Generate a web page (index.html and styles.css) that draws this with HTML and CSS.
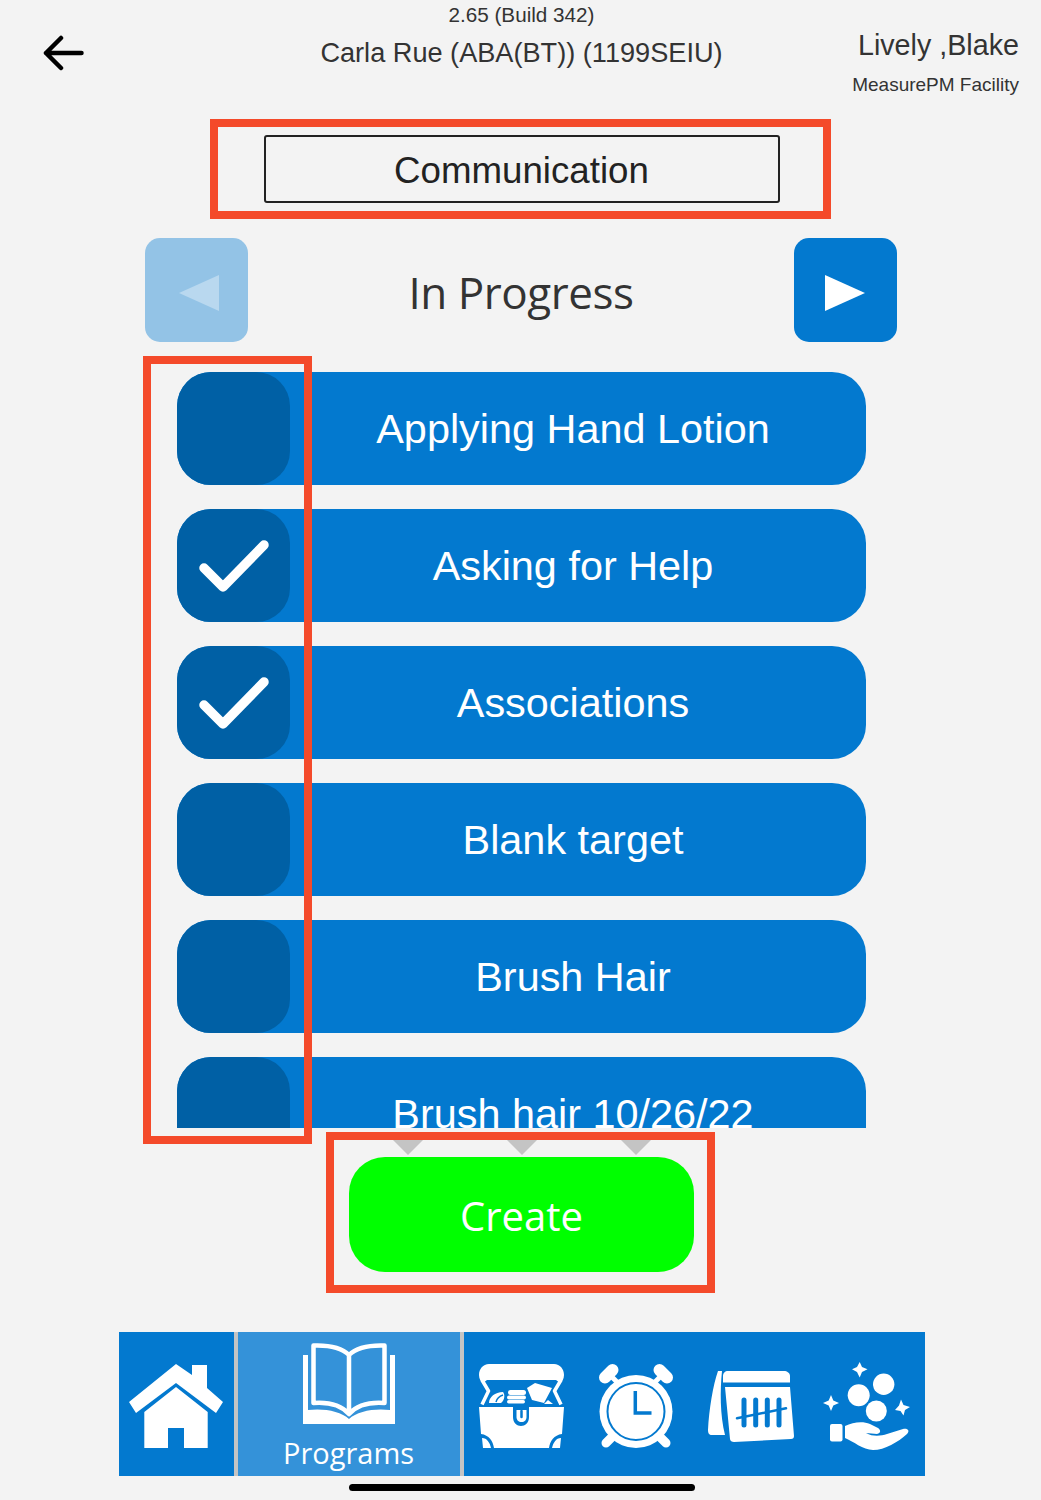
FILE: index.html
```html
<!DOCTYPE html>
<html lang="en">
<head>
<meta charset="utf-8">
<title>In Progress</title>
<link rel="stylesheet" href="styles.css">
</head>
<body>
<div class="page">
  <header class="header">
    <div class="header-left">
      <svg class="back" viewBox="0 0 42 36" width="42" height="36"><path d="M38.500 18H3M18 3 3 18l15 15" fill="none" stroke="#000" stroke-width="4.500" stroke-linecap="round" stroke-linejoin="round"/></svg>
    </div>
    <div class="header-center">
      <div class="version">2.65 (Build 342)</div>
      <div class="client">Carla Rue (ABA(BT)) (1199SEIU)</div>
    </div>
    <div class="header-right">
      <div class="user">Lively ,Blake</div>
      <div class="facility">MeasurePM Facility</div>
    </div>
  </header>

  <div class="domain-frame">
    <div class="domain">Communication</div>
  </div>

  <div class="status-nav">
    <button class="nav-btn nav-btn-off"><svg viewBox="0 0 40 36" width="40" height="36"><path d="M40 0V36L0 18Z" fill="#b9d8ef"/></svg></button>
    <div class="status">In Progress</div>
    <button class="nav-btn"><svg viewBox="0 0 40 36" width="40" height="36"><path d="M0 0V36L40 18Z" fill="#fff"/></svg></button>
  </div>

  <div class="list">
    <div class="row"><span class="check"></span><span class="label">Applying Hand Lotion</span></div>
    <div class="row"><span class="check"><svg viewBox="0 0 113 113" width="113" height="113"><path d="M27 59 46 78 87 36" fill="none" stroke="#fff" stroke-width="9.500" stroke-linecap="round" stroke-linejoin="round"/></svg></span><span class="label">Asking for Help</span></div>
    <div class="row"><span class="check"><svg viewBox="0 0 113 113" width="113" height="113"><path d="M27 59 46 78 87 36" fill="none" stroke="#fff" stroke-width="9.500" stroke-linecap="round" stroke-linejoin="round"/></svg></span><span class="label">Associations</span></div>
    <div class="row"><span class="check"></span><span class="label">Blank target</span></div>
    <div class="row"><span class="check"></span><span class="label">Brush Hair</span></div>
    <div class="row"><span class="check"></span><span class="label">Brush hair 10/26/22</span></div>
  </div>

  <div class="create-frame">
    <div class="hints"><i class="hint"></i><i class="hint"></i><i class="hint"></i></div>
    <button class="create">Create</button>
  </div>

  <nav class="tabbar">
    <div class="tab-home">
      <svg viewBox="0 0 94 85" width="94" height="85"><path d="M47 1 63 12V2H78V25L94 39 87 50 47 20 7 50 0 39Z" fill="#fff"/><path d="M15.300 49 47 24 78.700 49V85H55V65H39V85H15.300Z" fill="#fff"/></svg>
    </div>
    <div class="tab-programs">
      <svg viewBox="0 0 92 82" width="92" height="82"><path d="M0 12H5V67C20 65 38 68 46 76 54 68 72 65 87 67V12H92V81H0Z" fill="#fff"/><path d="M10.500 2.500C24 2 38 4 46 12 54 4 68 2 81.500 2.500V60C68 59 54 62 46 71 38 62 24 59 10.500 60ZM46 12V71" fill="none" stroke="#fff" stroke-width="4.500" stroke-linejoin="round"/></svg>
      <span class="tab-label">Programs</span>
    </div>
    <div class="tab-rest">
      <svg viewBox="0 0 85 84" width="85" height="84">
        <path d="M10 0H75C81 0 85 5 85 11 85 15 83 18 81 19L77 16H8L4 19C2 18 0 15 0 11 0 5 4 0 10 0Z" fill="#fff"/>
        <path d="M3 16 9.500 27 3 40.500M82 16 75.500 27 82 40.500" fill="none" stroke="#fff" stroke-width="3.500" stroke-linejoin="round"/>
        <path d="M0 43H34V53C34 59 38 62 42 62S50 59 50 53V43H85L83 70C75 71 71 77 70 84H15C14 77 10 71 2 70Z" fill="#fff"/>
        <path d="M3 74C8 74 11 79 12 84H4ZM82 74C77 74 74 79 73 84H81Z" fill="#fff"/>
        <path d="M37.500 46H47.500V53C47.500 56 45.500 58 42.500 58S37.500 56 37.500 53Z" fill="#fff"/>
        <path d="M42.500 47V53" stroke="#0379cf" stroke-width="2.500" stroke-linecap="round"/>
        <path d="M10 39C10 33 16 28 24 28 26 30 26 36 22 39Z" fill="#fff"/>
        <path d="M17 38C18 34 21 32 24 31" fill="none" stroke="#0379cf" stroke-width="1.500"/>
        <rect x="29" y="26" width="18" height="5" rx="2.500" fill="#fff"/><rect x="28" y="31.500" width="19" height="4" rx="2" fill="#fff"/><rect x="28" y="36" width="18" height="3.500" rx="1.700" fill="#fff"/>
        <path d="M48 24 56 19 73 24 65 39 53 36Z" fill="#fff"/>
        <path d="M65 40 69 36 74 40Z" fill="#fff"/>
      </svg>
      <svg viewBox="0 0 74 84" width="74" height="84">
        <path d="M6 13.500 13.500 6M68 13.500 60.500 6" stroke="#fff" stroke-width="12" stroke-linecap="round"/>
        <path d="M10 10 18 18M64 10 56 18" stroke="#fff" stroke-width="5"/>
        <path d="M7 79 14 72M67 79 60 72" stroke="#fff" stroke-width="9" stroke-linecap="round"/>
        <circle cx="37" cy="47.500" r="36.500" fill="#fff"/>
        <circle cx="37" cy="47.500" r="28.500" fill="none" stroke="#0379cf" stroke-width="2"/>
        <path d="M36.300 27V49H52.500" fill="none" stroke="#0379cf" stroke-width="3.500"/>
      </svg>
      <svg viewBox="0 0 86 72" width="86" height="72">
        <path d="M10 1H14C12 20 12 45 17 65H4C1 65 0 63 0 60 1 40 5 15 10 1Z" fill="#fff"/>
        <path d="M15 12.500V6C15 3 17 1 20 1H76C79 1 82 3 82 6V12.500Z" fill="#fff"/>
        <path d="M17 17H82L86 66C86 68 85 69 83 69L26 72C24 72 22 71 22 69Z" fill="#fff"/>
        <path d="M36 30V55M47.700 30V55M59.300 30V55M71 30V55" stroke="#0379cf" stroke-width="5" stroke-linecap="round"/>
        <path d="M29 48.300 78 38.300" stroke="#0379cf" stroke-width="2.500" stroke-linecap="round"/>
      </svg>
      <svg class="coins" viewBox="0 0 87 88" width="87" height="88">
        <circle cx="60.700" cy="22.300" r="10.700" fill="#fff"/><circle cx="35.700" cy="33.300" r="11" fill="#fff"/><circle cx="53.300" cy="49" r="10.500" fill="#fff"/>
        <path d="M36.700 0 39 5 44.500 7.300 39 10 36.700 15.500 34 10 29 7.300 34 5Z" fill="#fff"/>
        <path d="M8 33 10.300 38.500 16 41 10.300 43.500 8 49 5.700 43.500 0 41 5.700 38.500Z" fill="#fff"/>
        <path d="M78 37.500 80.500 43 87 45 82 48 80.500 53.500 77.500 49 72 48 76 43.500Z" fill="#fff"/>
        <rect x="7" y="62" width="12.500" height="17.500" rx="2" fill="#fff"/>
        <path d="M22 64C30 60 40 59 47 62L55 66C58 68 58 71 54 72L43 71C50 75 58 74 64 72L80 67C85 66 87 69 84 72 75 80 62 88 50 88 40 88 30 79 22 76Z" fill="#fff"/>
      </svg>
    </div>
  </nav>

  <div class="home-indicator"></div>

  <div class="targets-frame"></div>
</div>
</body>
</html>
```

FILE: styles.css
```css
* { box-sizing: border-box; }
html, body { margin: 0; padding: 0; }
body { background: #f3f3f3; font-family: "Liberation Sans", Arial, sans-serif; }

.page {
  position: relative;
  width: 1041px;
  height: 1500px;
  padding-left: 2px;
  display: flex;
  flex-direction: column;
  align-items: center;
  overflow: hidden;
}

.header {
  width: 1041px;
  height: 119px;
  margin-left: -2px;
  display: grid;
  grid-template-columns: 1fr auto 1fr;
  color: #333;
}
.header-left { padding: 35px 0 0 43px; }
.back { display: block; }
.header-center { text-align: center; padding-left: 2px; }
.version { font-size: 20.700px; line-height: 24px; margin-top: 3px; }
.client { font-size: 27.150px; line-height: 32px; margin-top: 10px; }
.header-right { text-align: right; padding: 26px 22px 0 0; }
.user { font-size: 28.700px; line-height: 38px; }
.facility { font-size: 19px; line-height: 24px; margin-top: 9px; }

.domain-frame {
  width: 621px;
  height: 100px;
  margin-left: -2px;
  border: 8px solid #f44a2a;
  padding: 8px 0 0 2px;
  display: flex;
  justify-content: center;
}
.domain {
  width: 516px;
  height: 68px;
  border: 2px solid #222;
  border-radius: 3px;
  font-size: 36.700px;
  line-height: 67px;
  text-align: center;
  color: #222;
}

.status-nav {
  width: 752px;
  height: 104px;
  margin: 19px 0 0 -1px;
  display: flex;
  justify-content: space-between;
  align-items: center;
}
.nav-btn {
  width: 103px;
  height: 104px;
  border: 0;
  padding: 6px 0 0;
  border-radius: 15px;
  background: #0379cf;
  display: flex;
  align-items: center;
  justify-content: center;
}
.nav-btn-off { background: #93c3e6; padding-left: 4px; }
.status {
  font-family: "Open Sans", sans-serif;
  font-size: 44px;
  letter-spacing: -0.450px;
  color: #333;
  line-height: 104px;
  padding-top: 4px;
}

.list {
  width: 689px;
  height: 756px;
  margin-top: 30px;
  display: flex;
  flex-direction: column;
  gap: 24px;
  overflow: hidden;
}
.row {
  flex: 0 0 113px;
  display: flex;
  background: #0379cf;
  border-radius: 34px;
}
.check {
  flex: 0 0 113px;
  height: 113px;
  background: #0060a5;
  border-radius: 34px;
}
.check svg { display: block; }
.label {
  flex: 1;
  height: 113px;
  padding-right: 10px;
  text-align: center;
  color: #fff;
  font-size: 41.400px;
  line-height: 114px;
}

.create-frame {
  width: 389px;
  height: 161px;
  margin-top: 4px;
  margin-left: -2px;
  border: 8px solid #f44a2a;
  padding-left: 2px;
  display: flex;
  flex-direction: column;
  align-items: center;
}
.hints { display: flex; gap: 84px; height: 17px; }
.hint {
  width: 0;
  height: 0;
  border-left: 15.500px solid transparent;
  border-right: 15.500px solid transparent;
  border-top: 15px solid #c4c4c4;
}
.create {
  width: 345px;
  height: 115px;
  border: 0;
  border-radius: 36px;
  background: #00ff00;
  color: #fff;
  font-family: "Open Sans", sans-serif;
  font-size: 40px;
  padding: 2px 0 0;
}

.tabbar {
  width: 806px;
  height: 144px;
  margin-top: 39px;
  display: flex;
  background: #0379cf;
}
.tab-home {
  width: 115px;
  display: flex;
  align-items: center;
  justify-content: center;
  padding: 3px 7px 0 6px;
}
.tab-programs {
  width: 230px;
  border-left: 4px solid #c4c4c4;
  border-right: 4px solid #c4c4c4;
  background: #3492d9;
  display: flex;
  flex-direction: column;
  align-items: center;
  padding-top: 11px;
  color: #fff;
}
.tab-programs svg { display: block; }
.tab-label {
  font-family: "Open Sans", sans-serif;
  font-size: 29px;
  line-height: 40px;
  margin-top: 8px;
}
.tab-rest {
  flex: 1;
  display: flex;
  align-items: center;
  gap: 35px;
  padding: 4px 0 0 15px;
}
.coins { margin-left: -6px; }

.home-indicator {
  width: 346px;
  height: 7px;
  margin-top: 8px;
  background: #000;
  border-radius: 4px;
}

.targets-frame {
  position: absolute;
  left: 143px;
  top: 356px;
  width: 169px;
  height: 788px;
  border: 8px solid #f44a2a;
}
```
